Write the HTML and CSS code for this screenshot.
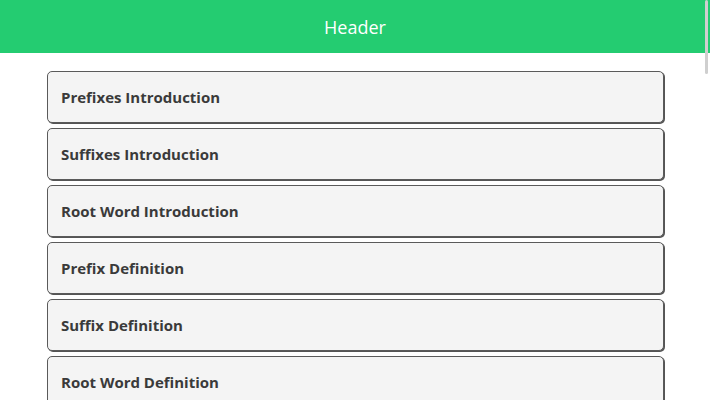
FILE: index.html
```html
<!DOCTYPE html>
<html lang="en">
<head>
<meta charset="utf-8">
<title>Header</title>
<link rel="stylesheet" href="styles.css">
</head>
<body>
  <header class="top-bar">Header</header>
  <ul class="lesson-list">
    <li class="lesson">Prefixes Introduction</li>
    <li class="lesson">Suffixes Introduction</li>
    <li class="lesson">Root Word Introduction</li>
    <li class="lesson">Prefix Definition</li>
    <li class="lesson">Suffix Definition</li>
    <li class="lesson">Root Word Definition</li>
  </ul>
  <div class="scroll-thumb"></div>
</body>
</html>
```
FILE: styles.css
```css
html, body {
  margin: 0;
  padding: 0;
  background: #ffffff;
  font-family: "Open Sans", "Noto Sans", sans-serif;
}
body {
  overflow: hidden;
  height: 400px;
}
.top-bar {
  height: 53px;
  background: #24cc71;
  color: #ffffff;
  font-size: 18px;
  display: flex;
  align-items: center;
  justify-content: center;
}
.lesson-list {
  list-style: none;
  margin: 0;
  padding: 18px 46px 0 47px;
  display: flex;
  flex-direction: column;
  gap: 5px;
}
.lesson {
  box-sizing: border-box;
  flex: none;
  height: 52px;
  border: 1px solid #5a5a5a;
  border-radius: 5px;
  box-shadow: 1px 1px 0 #555555;
  background: #f4f4f4;
  color: #3a3a3a;
  font-size: 15px;
  font-weight: 700;
  display: flex;
  align-items: center;
  padding-left: 13px;
}
.scroll-thumb {
  position: fixed;
  top: 0;
  right: 2px;
  width: 3px;
  height: 74px;
  background: #cfcfcf;
  border-radius: 2px;
}
```
